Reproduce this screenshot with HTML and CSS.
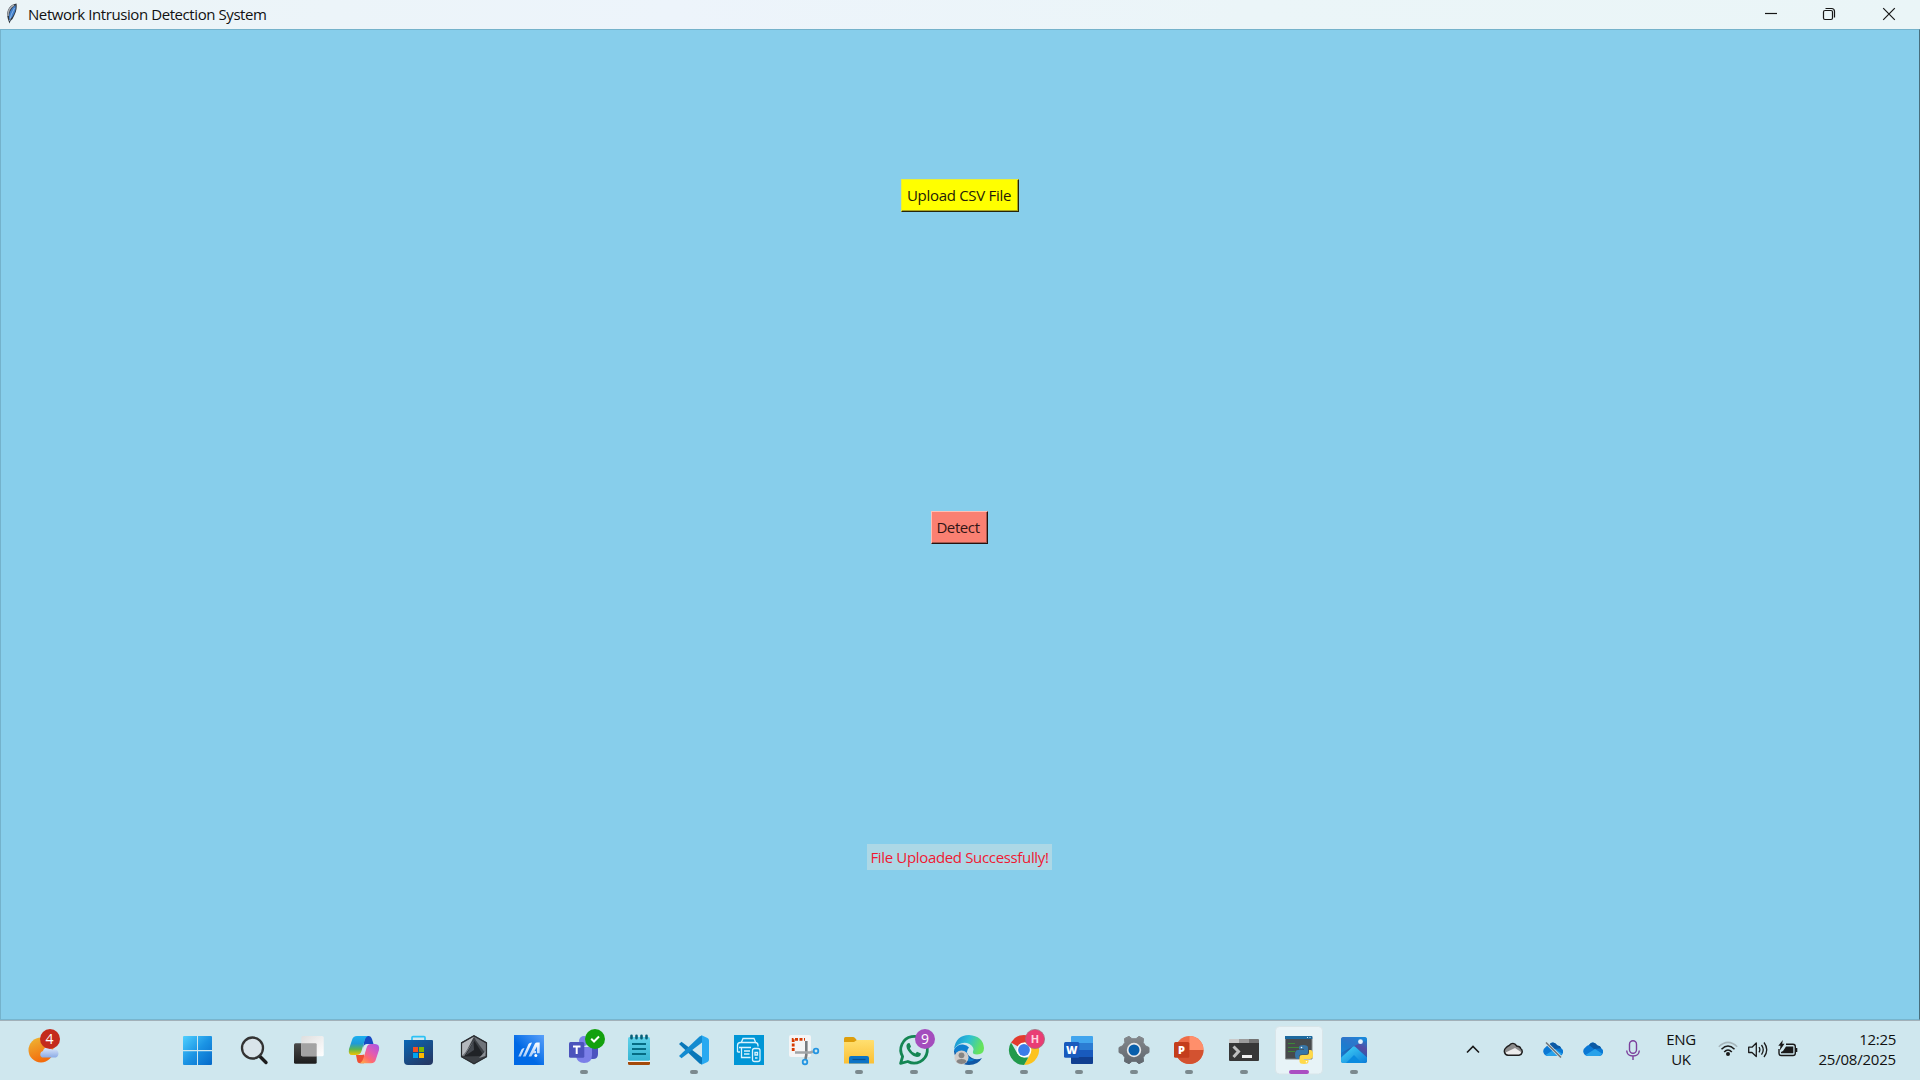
FILE: index.html
```html
<!DOCTYPE html>
<html lang="en">
<head>
<meta charset="utf-8">
<title>Network Intrusion Detection System</title>
<link rel="stylesheet" href="styles.css">
</head>
<body>
<header class="titlebar">
  <svg class="feather" width="12" height="21" viewBox="0 0 12 21"><path d="M3.500 20.500C2.500 18 .8 14 1.200 10Q2 4 7 1.500L10.500.500Q11.500 6 8.500 12Q7 16 4.500 18Z" fill="#2f353c"/><path d="M3 14Q3 7 9.500 2Q10.500 7 7 13Q5.500 16 3 16Z" fill="#417fcb"/><path d="M2 13Q2 5 8 2" fill="none" stroke="#a9adb3" stroke-width="1.500"/><path d="M3.500 18Q5 11 8.500 5" fill="none" stroke="#9dc4f0" stroke-width=".8"/></svg>
  <h1 class="title">Network Intrusion Detection System</h1>
  <div class="controls">
    <svg class="control" viewBox="0 0 58 29"><path d="M22 13.500H34"/></svg>
    <svg class="control" viewBox="0 0 58 29"><rect x="22.500" y="10.500" width="9" height="9" rx="1.500"/><path d="M24.500 8.500H30.500Q33.500 8.500 33.500 11.500V17.500"/></svg>
    <svg class="control" viewBox="0 0 58 29"><path d="M23.200 8.200L34.800 19.800M34.800 8.200L23.200 19.800"/></svg>
  </div>
</header>

<main class="window">
  <button class="button upload">Upload CSV File</button>
  <button class="button detect">Detect</button>
  <p class="status">File Uploaded Successfully!</p>
</main>

<footer class="taskbar">
  <svg class="weather" viewBox="0 0 55 60">
    <defs>
      <linearGradient id="sun" x2=".4" y2="1"><stop stop-color="#eeb936"/><stop offset="1" stop-color="#f36c0c"/></linearGradient>
      <linearGradient id="cloud" x2="0" y2="1"><stop stop-color="#dfeafb"/><stop offset="1" stop-color="#8babe6"/></linearGradient>
    </defs>
    <circle cx="21" cy="30" r="12.500" fill="url(#sun)"/>
    <path d="M22 37.500a3.500 3.500 0 0 1 1-6.500a5 5 0 0 1 9-1.500a4 4 0 0 1 4 8Z" fill="url(#cloud)"/>
    <circle cx="30" cy="19" r="10" fill="#c42b1c"/>
    <text x="29.500" y="24" class="badge-text">4</text>
  </svg>

  <nav class="apps">
    <svg class="app" viewBox="0 0 55 60">
      <defs><linearGradient id="win" x1="0" y1="0" x2="1" y2="1"><stop stop-color="#4fd0ff"/><stop offset=".5" stop-color="#1b94e4"/><stop offset="1" stop-color="#0568c8"/></linearGradient></defs>
      <path d="M13 16H26V30H12V17Q12 16 13 16ZM27 16H40Q41 16 41 17V30H27ZM12 31.200H26V45H13Q12 45 12 44ZM27 31.200H41V44Q41 45 40 45H27Z" fill="url(#win)"/>
    </svg>
    <svg class="app" viewBox="0 0 55 60">
      <path d="M33.500 36L40 42.500" stroke="#1d1d1d" stroke-width="3.400" stroke-linecap="round"/>
      <circle cx="26.500" cy="28" r="10.500" fill="#d9e4ea" stroke="#333" stroke-width="2.300"/>
    </svg>
    <svg class="app" viewBox="0 0 55 60">
      <defs><linearGradient id="tv" x2="0" y2="1"><stop stop-color="#4a4a4a"/><stop offset="1" stop-color="#1d1d1d"/></linearGradient><linearGradient id="tl" x2="1" y2="1"><stop stop-color="#dedede"/><stop offset="1" stop-color="#fff"/></linearGradient></defs>
      <rect x="13" y="23.300" width="22.700" height="20.400" rx="1.500" fill="url(#tv)"/>
      <rect x="20.300" y="16" width="22.400" height="20.300" rx="1.500" fill="url(#tl)"/>
      <path d="M20.300 23.300H34.500Q35.700 23.300 35.700 24.500V36.300H21.500Q20.300 36.300 20.300 35Z" fill="#a3a3a3"/>
    </svg>
    <svg class="app" viewBox="0 0 55 60">
      <defs>
        <linearGradient id="ca" x2="0" y2="1"><stop stop-color="#1bb0f0"/><stop offset=".4" stop-color="#1f9ad8"/><stop offset=".7" stop-color="#5cb552"/><stop offset="1" stop-color="#f0c400"/></linearGradient>
        <linearGradient id="cb" x1="1" y1="0" x2=".2" y2="1"><stop stop-color="#a355e8"/><stop offset=".45" stop-color="#e05bb5"/><stop offset=".75" stop-color="#ff6a70"/><stop offset="1" stop-color="#ffa34d"/></linearGradient>
      </defs>
      <path d="M29 16H33Q35 16 36 19L37.500 24H31Q28 24 27 28Z" fill="#174bc4"/>
      <path d="M20 35H26L28 30V43.300H24Q21.500 43.300 21 40Z" fill="#ee5033"/>
      <path d="M21 16H32Q29.500 17 28.500 21L25.500 31Q24.500 35 20 35H16Q12 35 13 29L16 20Q17 16 21 16Z" fill="url(#ca)"/>
      <path d="M35 24H39Q44 24 43 30L40 39Q39 43.300 35 43.300H24Q26.500 42 27.500 38L30.500 28Q31.500 24 35 24Z" fill="url(#cb)"/>
      <path d="M28.500 25.500L31 24.500L28.200 34.500L25.500 35Z" fill="#dcebf0"/>
    </svg>
    <svg class="app" viewBox="0 0 55 60">
      <defs><linearGradient id="st" x2=".7" y2="1"><stop stop-color="#0967b5"/><stop offset="1" stop-color="#243a67"/></linearGradient></defs>
      <path d="M21 21V17.500Q21 16.700 22 16.700H33Q34 16.700 34 17.500V21" fill="none" stroke="#2cc2f5" stroke-width="1.700"/>
      <path d="M13 20H41Q42 20 42 21V41Q42 45 38 45H17Q13 45 13 41Z" fill="url(#st)"/>
      <path d="M22 27h5v5h-5z" fill="#f25022"/><path d="M28 27h5v5h-5z" fill="#7fba00"/><path d="M22 33h5v5h-5z" fill="#00a4ef"/><path d="M28 33h5v5h-5z" fill="#ffb900"/>
    </svg>
    <svg class="app" viewBox="0 0 55 60">
      <path d="M28 15.300L41 22.500V37L28 44.300L15 37V22.500Z" fill="#3c4045"/>
      <path d="M28 16.500L16 23.500V36L19.500 33Z" fill="#b4b8bd"/><path d="M28 16.500L40 23.500V34L30 20.500Z" fill="#6f747a"/><path d="M16.500 36L28 20.500L19 36Z" fill="#75797f"/><path d="M28.500 21L38 36L18 36.500Z" fill="#202327"/><path d="M33 38L39.500 36V31Z" fill="#8c9095"/><path d="M27.500 22L19.500 35.500L28 30Z" fill="#454a51"/>
      <path d="M28 15.800L40.500 22.800V36.700L28 43.800L15.500 36.700V22.800Z" fill="none" stroke="#2b2e32" stroke-width="1.200"/>
    </svg>
    <svg class="app" viewBox="0 0 55 60">
      <defs><linearGradient id="my" x1="1" y1="0" x2=".4" y2=".6"><stop stop-color="#5aa0fa"/><stop offset="1" stop-color="#0069e5"/></linearGradient><linearGradient id="mw" x2="0" y2="1"><stop stop-color="#fff"/><stop offset="1" stop-color="#a8cbf8"/></linearGradient></defs>
      <path d="M13 15h30v30H13z" fill="url(#my)"/>
      <path d="M17.300 36.500L20.500 29.500Q21.300 28 23.500 28L19.800 36.500ZM21.800 36.500L27.500 24Q28.300 22.500 31 22.500L24.600 36.500ZM27.500 36.500L34 23.500Q34.700 22.500 36 22.500H38.700V33.300H36V26.500L33.500 31H35V33.300H32.200L30.300 36.500Z" fill="url(#mw)"/><circle cx="34.800" cy="35.500" r="1.500" fill="#fff"/>
    </svg>
    <svg class="app" viewBox="0 0 55 60">
      <circle cx="38" cy="23" r="4" fill="#4f55c8"/><circle cx="28" cy="21" r="5" fill="#7b83eb"/>
      <path d="M32 27H42V34Q42 39 37 39H32Z" fill="#4c53bf"/><path d="M20 27H36V35Q36 43 28 43Q21 43 20 36Z" fill="#7b7fe8"/>
      <rect x="13" y="22" width="15.300" height="15.700" rx="1.500" fill="#4b53bc"/><path d="M17 26.500H24.500M20.700 26.500V34" stroke="#fff" stroke-width="2"/>
      <circle cx="39" cy="19" r="10" fill="#13a10e"/><path d="M35.200 18.800L38 21.500L43 16.500" fill="none" stroke="#fff" stroke-width="2"/>
      <rect class="dot" x="24" y="50" width="8" height="4" rx="2"/>
    </svg>
    <svg class="app" viewBox="0 0 55 60">
      <defs><linearGradient id="np" x2="0" y2="1"><stop stop-color="#61d2ea"/><stop offset="1" stop-color="#35b4d2"/></linearGradient></defs>
      <path d="M17 39H39V43.500Q39 45 37.500 45H18.500Q17 45 17 43.500Z" fill="#a44a0a"/><path d="M17 38H39V42H17Z" fill="#f4f4f4"/>
      <rect x="17" y="17" width="22" height="23.800" rx="1.500" fill="url(#np)"/>
      <path d="M21 24H35M21 29H35M21 34H35" stroke="#056c84" stroke-width="1.800"/>
      <path d="M20.500 15.700V18.300M25.500 15.700V18.300M30.500 15.700V18.300M35.500 15.700V18.300" stroke="#075f78" stroke-width="2.600" stroke-linecap="round"/>
    </svg>
    <svg class="app" viewBox="0 0 55 60">
      <path d="M13 24L15.500 21.700L36 37.500V44.500L33.500 43.500Z" fill="#0877b9"/>
      <path d="M13 36L15.500 38.300L36 22.500V15.500L33.500 16.500Z" fill="#138bd0"/>
      <path d="M35 15L41.500 18Q43 18.700 43 20.500V39.500Q43 41.300 41.500 42L35 45Q36 44.500 36 42V18Q36 15.500 35 15Z" fill="#28a9f1"/>
      <rect class="dot" x="24" y="50" width="8" height="4" rx="2"/>
    </svg>
    <svg class="app" viewBox="0 0 55 60">
      <path d="M13 15h30v30H13z" fill="#0096d6"/>
      <g fill="none" stroke="#d8f2fc" stroke-width="1.300"><path d="M20.500 22L22 18.500H33L34.500 22M16.500 32V25.500Q16.500 22.500 19.500 22.500H34Q37 22.500 37 25.500V26.500M18 27.500H30M20.500 28V37.500H29.500M23 31H29M23 34H28.500M16.500 32H19"/><rect x="31.500" y="28.500" width="7.500" height="13" rx="2"/><path d="M34 32.500H36.500V35H34ZM34 38H36.500"/></g>
    </svg>
    <svg class="app" viewBox="0 0 55 60">
      <rect x="13" y="15" width="22" height="22" rx="2" fill="#f4f5f6"/>
      <path d="M17.200 31V19.300H29" fill="none" stroke="#d83b01" stroke-width="2.800" stroke-dasharray="3 1.500"/>
      <path d="M30.300 21V35L29.500 39" fill="none" stroke="#777c80" stroke-width="2.600"/><path d="M19 32.500H34.500L37 31.500" fill="none" stroke="#a1a5a8" stroke-width="2.600"/>
      <circle cx="40" cy="31" r="2.300" class="snip-ring"/><circle cx="29" cy="42" r="2.300" class="snip-ring"/>
    </svg>
    <svg class="app" viewBox="0 0 55 60">
      <defs><linearGradient id="fo" x2="0" y2="1"><stop stop-color="#ffdf70"/><stop offset="1" stop-color="#fbc034"/></linearGradient></defs>
      <path d="M13 18.500Q13 17 14.500 17H22Q23 17 24 18L26 20.500V24H13Z" fill="#dd9e0c"/>
      <path d="M13 22H23L26 20H42Q43 20 43 21V43.500H13Z" fill="url(#fo)"/>
      <path d="M18 43.500V38Q18 36 20 36H36Q38 36 38 38V43.500Z" fill="#0c74c6"/><path d="M21.500 39.500H34.500" stroke="#0a518f" stroke-width="1.200"/>
      <rect class="dot" x="24" y="50" width="8" height="4" rx="2"/>
    </svg>
    <svg class="app" viewBox="0 0 55 60">
      <path d="M14.600 43.400L16.600 36.500A13.300 13.300 0 1 1 21.800 41.500Z" fill="none" stroke="#148653" stroke-width="2.800" stroke-linejoin="round"/>
      <path d="M20.500 25Q21.500 22.500 23.500 23L25 26.500L23.800 28.500Q25.500 32 29.500 33.500L31 31.700L35 33.500Q34.500 37 31 37Q27 36.500 23.500 32.500Q20 28.500 20.500 25Z" fill="#148653"/>
      <circle cx="39" cy="19" r="10" fill="#a44dbd"/><text x="39" y="24" class="badge-text">9</text>
      <rect class="dot" x="24" y="50" width="8" height="4" rx="2"/>
    </svg>
    <svg class="app" viewBox="0 0 55 60">
      <defs><linearGradient id="ed" x2="1" y2=".3"><stop stop-color="#168bd3"/><stop offset=".5" stop-color="#2bbfd7"/><stop offset="1" stop-color="#66e35c"/></linearGradient></defs>
      <path d="M13 31A15 15 0 0 0 28 45Q37 45 41 38Q36 40.500 31 38Q25 35 25.500 29Q20 23 13 31Z" fill="#0f57a5"/>
      <path d="M13 29Q15 15 28 15Q42 16 43 28Q43 34.500 36 34.500Q31 34.500 32 31.500Q34 27.500 28.500 24Q20 20 13 29Z" fill="url(#ed)"/>
      <path d="M13 30Q16 24 22 24.500Q26 25 28 27.500Q25 31 26.500 35Q29 40 34 39.500Q29 43 23 40Q17 38 13 30Z" fill="#0f7fd0"/>
      <circle cx="20.500" cy="37.500" r="7" fill="#cfccca"/><circle cx="20.500" cy="35.300" r="2.900" fill="#858483"/><path d="M15.500 42Q15.500 39 20.500 39T25.500 42Q20.500 46 15.500 42Z" fill="#858483"/>
      <rect class="dot" x="24" y="50" width="8" height="4" rx="2"/>
    </svg>
    <svg class="app" viewBox="0 0 55 60">
      <path d="M28 30L15 22.500A15 15 0 0 1 41 22.500H28Z" fill="#e33b2e"/>
      <path d="M28 30V22.500H41A15 15 0 0 1 28 45L34.500 33.700Z" fill="#fcc31e"/>
      <path d="M28 45A15 15 0 0 1 15 22.500L21.500 33.700L28 37.500H32.300Z" fill="#229a4c"/>
      <circle cx="28" cy="30" r="7.400" fill="#fff"/><circle cx="28" cy="30" r="5.900" fill="#3b7de9"/>
      <circle cx="39" cy="19" r="9.600" fill="#e93d74" stroke="#9a6d78" stroke-width=".7"/><text x="39" y="23" class="profile-text">H</text>
      <rect class="dot" x="24" y="50" width="8" height="4" rx="2"/>
    </svg>
    <svg class="app" viewBox="0 0 55 60">
      <path d="M20 17Q20 16 21 16H41Q42 16 42 17V23H20Z" fill="#41a5ee"/><path d="M20 23h22v7H20z" fill="#2b7cd3"/><path d="M20 30h22v7H20z" fill="#185abd"/><path d="M20 37H42V43Q42 44 41 44H21Q20 44 20 43Z" fill="#103f91"/>
      <rect x="13" y="22" width="15.300" height="15.700" rx="1.500" fill="#185abd"/><text x="20.600" y="33.800" class="tile-text">W</text>
      <rect class="dot" x="24" y="50" width="8" height="4" rx="2"/>
    </svg>
    <svg class="app" viewBox="0 0 55 60">
      <defs><linearGradient id="ge" x2="0" y2="1"><stop stop-color="#84888c"/><stop offset="1" stop-color="#60676e"/></linearGradient></defs>
      <path d="M23 16.300L26 18.700H30L33 16.300L37.500 18.500L37.200 22.500L39.500 25.800L43 27.500V32.500L39.500 34.200L37.200 37.500L37.500 41.500L33 43.700L30 41.300H26L23 43.700L18.500 41.500L18.800 37.500L16.500 34.200L13 32.500V27.500L16.500 25.800L18.800 22.500L18.500 18.500Z" fill="url(#ge)" stroke="url(#ge)" stroke-linejoin="round"/>
      <circle cx="28" cy="30" r="7.200" fill="#e7e9eb"/><circle cx="28" cy="30" r="5.500" fill="#075eab"/>
      <rect class="dot" x="24" y="50" width="8" height="4" rx="2"/>
    </svg>
    <svg class="app" viewBox="0 0 55 60">
      <circle cx="28.500" cy="30" r="14" fill="#ed6c47"/><path d="M28.500 16A14 14 0 0 1 42.500 30H28.500Z" fill="#ff8f6b"/><path d="M14.500 30H42.500A14 14 0 0 1 14.500 30Z" fill="#d35230"/>
      <rect x="13" y="22" width="15.300" height="15.700" rx="1.500" fill="#c43e1c"/><text x="20.600" y="33.800" class="tile-text">P</text>
      <rect class="dot" x="24" y="50" width="8" height="4" rx="2"/>
    </svg>
    <svg class="app" viewBox="0 0 55 60">
      <path d="M13 23V20Q13 19 14 19H23V23Z" fill="#cacaca"/><path d="M23 19h10v4H23z" fill="#9b9b9b"/><path d="M33 19H42Q43 19 43 20V23H33Z" fill="#727272"/>
      <path d="M13 23H43V40Q43 41 42 41H14Q13 41 13 40Z" fill="#373737"/><path d="M17.500 26.500L22.500 31.500L17.500 37" fill="none" stroke="#bfbfbf" stroke-width="3"/><path d="M26 36.500H36" stroke="#efefef" stroke-width="3"/>
      <rect class="dot" x="24" y="50" width="8" height="4" rx="2"/>
    </svg>
    <svg class="app" viewBox="0 0 55 60">
      <rect x="4.500" y="6.500" width="47" height="47.500" rx="4" fill="#e7f3f7" stroke="#d8e5e9"/>
      <path d="M14.500 17h26.500v22H14.500z" fill="#474a4c" stroke="#85898b"/><path d="M14 16h27.300v3H14z" fill="#1c699f"/><path d="M36 17.500h1M38.500 17.500h1" stroke="#d5eafa"/>
      <path d="M17 23.500H24M17 27.500H28M17 31.500H24" stroke="#3c8738" stroke-width="1.200"/>
      <path d="M28 29.500V27Q28 25 32.500 25T37 27.500V32Q37 34.500 34.500 34.500H30.500Q28 34.500 28 37V39H26.500Q24 39 24 34.500T27 30H33V29.200Z" fill="#3776a8"/>
      <path d="M38 30H39.500Q42 30 42 34.500T39 39H33V40H37.500V41.500Q37.500 44 33 44T28.500 41.500V37Q28.500 35 31 35H35Q38 35 38 32.500Z" fill="#ffd94a"/><circle cx="30.500" cy="27.500" r=".8" fill="#fff"/><circle cx="35.500" cy="41.700" r=".8" fill="#fff"/>
      <rect x="18" y="50" width="20" height="4" rx="2" fill="#aa4fc2"/>
    </svg>
    <svg class="app" viewBox="0 0 55 60">
      <defs><linearGradient id="ph" x1=".2" y1="1" x2=".8" y2="0"><stop stop-color="#1188de"/><stop offset=".45" stop-color="#235fae"/><stop offset=".7" stop-color="#564ba4"/><stop offset="1" stop-color="#1a80d0"/></linearGradient><linearGradient id="pm" x2="1" y2="1"><stop stop-color="#45d8fa"/><stop offset="1" stop-color="#0b7cd8"/></linearGradient></defs>
      <rect x="15" y="17" width="26" height="26" rx="2.500" fill="url(#ph)"/><path d="M17.500 17H38.500Q41 17 41 19.500V20L24 28L15 33V19.500Q15 17 17.500 17Z" fill="#188cdf" opacity=".65"/>
      <path d="M15.300 37.500L26.500 27Q28 25.500 29.500 27L41 37.500V40.500Q41 43 38.500 43H17.500Q15 43 15 40.500Z" fill="url(#pm)"/><path d="M20 43L28 35L36 43Z" fill="#0a8bdf"/>
      <circle cx="34.500" cy="21.700" r="2.400" fill="#e4f1fb"/>
      <rect class="dot" x="24" y="50" width="8" height="4" rx="2"/>
    </svg>
  </nav>

  <div class="tray">
    <svg width="14" height="20" viewBox="0 0 14 20"><path d="M1 12.500L7 6.500L13 12.500" fill="none" stroke="#191919" stroke-width="1.600"/></svg>
    <svg width="20" height="20" viewBox="0 0 20 20"><path d="M5 15.300A4.200 4.200 0 0 1 3 7.800Q4.500 6 6.200 5.500Q10 1 14 6.200Q17 6 17.700 8.500A3.800 3.800 0 0 1 16 15.300Z" fill="#8c8c8c"/><path d="M4 15Q2 14 2.500 12.500L12 8L18 12Q18 15.300 15.500 15.300H5Z" fill="#ececec"/><path d="M5 15.300A4.200 4.200 0 0 1 3 7.800Q4.500 6 6.200 5.500Q10 1 14 6.200Q17 6 17.700 8.500A3.800 3.800 0 0 1 16 15.300Z" fill="none" stroke="#1f1f1f" stroke-width="1.400"/></svg>
    <svg width="20" height="20" viewBox="0 0 20 20"><path d="M5 16A4.700 4.700 0 0 1 2.500 7.300Q4 5.500 6 5Q10 0 14.500 5.500Q17.500 5.800 18.200 8.300A4.200 4.200 0 0 1 16 16Z" fill="#0a78d4"/><path d="M6 5Q10 0 14.500 5.500Q17.500 5.800 18.200 8.300L11 9Z" fill="#0c59a4"/><path d="M2.500 15L12 9L19 13.500Q18 16 15.500 16H5Z" fill="#28a2ea"/><path d="M3 2.500L18 17.500" stroke="#d0e4ea" stroke-width="3"/><path d="M3 2.500L18 17.500" stroke="#6f7477" stroke-width="1.500"/></svg>
    <svg width="20" height="20" viewBox="0 0 20 20"><path d="M5 16A4.700 4.700 0 0 1 2.500 7.300Q4 5.500 6 5Q10 0 14.500 5.500Q17.500 5.800 18.200 8.300A4.200 4.200 0 0 1 16 16Z" fill="#0a78d4"/><path d="M6 5Q10 0 14.500 5.500Q17.500 5.800 18.200 8.300L11 9Z" fill="#0c59a4"/><path d="M2.500 15L12 9L19 13.500Q18 16 15.500 16H5Z" fill="#28a2ea"/></svg>
    <svg width="20" height="20" viewBox="0 0 20 20"><g fill="none" stroke="#7c3f9c" stroke-width="1.400"><rect x="6.500" y=".7" width="7" height="12.600" rx="3.500"/><path d="M3.700 10.500Q4 16 10 16T16.300 10.500M10 16V20"/></g></svg>
  </div>
  <div class="language"><span>ENG</span><span>UK</span></div>
  <div class="quick">
    <svg width="20" height="20" viewBox="0 0 20 20"><g fill="none" stroke="#1a1a1a" stroke-width="1.500"><path d="M.8 6.800Q10-2 19.200 6.800" stroke="#a6b5ba"/><path d="M3.500 9.200Q10 2.800 16.500 9.200M6.200 12Q10 8 13.800 12"/></g><circle cx="10" cy="14" r="2" fill="#1a1a1a"/></svg>
    <svg width="20" height="20" viewBox="0 0 20 20"><g fill="none" stroke="#1a1a1a" stroke-width="1.300" stroke-linejoin="round"><path d="M.7 7.200H4L8.300 3V16.500L4 12.500H.7Z"/><path d="M11 7.200Q12.700 9.800 11 12.400M13.500 5Q17 9.800 13.500 14.700M16 2.500Q21.500 9.800 16 17"/></g></svg>
    <svg width="20" height="20" viewBox="0 0 20 20"><path d="M8 4.200H15Q17.300 4.200 17.300 6.500V13.200Q17.300 15.500 15 15.500H3.300Q1 15.500 1 13.200V9" fill="none" stroke="#1a1a1a" stroke-width="1.400"/><path d="M17.500 8H19.300V12H17.500Z" fill="#1a1a1a"/><path d="M8 6.500H15.300V13.300H3V12L5 11Z" fill="#1a1a1a"/><path d="M4.800 0L.3 5.800H2.500L1.800 10.500L6.500 3.800H4.200Z" fill="#1a1a1a"/></svg>
  </div>
  <div class="clock"><span>12:25</span><span class="date">25/08/2025</span></div>
</footer>
</body>
</html>
```
FILE: styles.css
```css
* { box-sizing: border-box; }

body {
  margin: 0;
  width: 1920px;
  height: 1080px;
  display: flex;
  flex-direction: column;
  overflow: hidden;
  font: 15px/20px "Open Sans", "Noto Sans", sans-serif;
  color: #111;
}

svg { display: block; flex: none; }

.titlebar {
  height: 29px;
  display: flex;
  align-items: center;
  padding: 0 2.5px 0 6px;
  background: linear-gradient(90deg, #ebf4f7, #edf4fb 35%, #ebf5f8 65%, #eaf5f7);
}

.feather { margin-top: -2px; }

.title {
  margin: 0 0 0 10px;
  font-size: 15px;
  font-weight: 400;
  line-height: 29px;
  letter-spacing: -0.42px;
}

.controls { display: flex; margin-left: auto; }

.control {
  width: 58px;
  height: 29px;
  margin-left: 0.5px;
  fill: none;
  stroke: #161616;
  stroke-width: 1.2;
}

.window {
  height: 991px;
  display: flex;
  flex-direction: column;
  align-items: center;
  padding-top: 149px;
  background: #87ceeb;
  border: 1px solid #74b2cb;
  border-right-color: #486f7e;
  border-bottom-color: #77b5ce;
}

.button {
  height: 33px;
  padding: 0 2px 2px 0;
  border: 1px solid;
  color: #241b08;
  font: inherit;
}

.upload {
  width: 118px;
  background: #ff0;
  border-color: #e8ee3c #26260a #26260a #e8ee3c;
  box-shadow: inset -1px -1px #aaa51c;
  letter-spacing: -0.3px;
}

.detect {
  width: 57px;
  margin: 299px 2px 0 0;
  background: #fa8072;
  border-color: #ffc0b5 #26120f #26120f #ffc0b5;
  box-shadow: inset -1px -1px #a5584f;
  letter-spacing: -0.4px;
  color: #321616;
}

.status {
  width: 185px;
  height: 26px;
  margin: 300px 1px 0 0;
  background: #add8e6;
  color: #f01832;
  line-height: 26px;
  text-align: center;
  letter-spacing: -0.34px;
}

.taskbar {
  height: 60px;
  display: flex;
  align-items: center;
  padding-left: 20px;
  background: #cfe7ee;
  box-shadow: inset 0 1px #a2b1b9;
}

.weather { width: 55px; height: 60px; }

.apps { display: flex; margin-left: 96px; }

.app { width: 55px; height: 60px; }

.dot { fill: #7b898e; }

.snip-ring { fill: none; stroke: #2395e2; stroke-width: 1.8; }

.badge-text {
  fill: #fff;
  font-size: 14px;
  text-anchor: middle;
}

.profile-text {
  fill: #ffd1df;
  font-size: 11px;
  font-weight: 700;
  text-anchor: middle;
}

.tile-text {
  fill: #fff;
  font-size: 11px;
  font-weight: 800;
  text-anchor: middle;
}

.tray {
  display: flex;
  align-items: center;
  gap: 20px;
  margin-left: 85px;
}

.tray svg:first-child { margin-right: 3px; }

.language {
  width: 50px;
  margin-left: 13px;
  padding-bottom: 2px;
  text-align: center;
  letter-spacing: -0.3px;
}

.language span, .clock span { display: block; }

.quick {
  display: flex;
  gap: 10px;
  margin-left: 12px;
}

.clock {
  margin: 0 24px 0 auto;
  padding-bottom: 2px;
  text-align: right;
  letter-spacing: -0.3px;
}

.date { letter-spacing: -0.2px; }
```
